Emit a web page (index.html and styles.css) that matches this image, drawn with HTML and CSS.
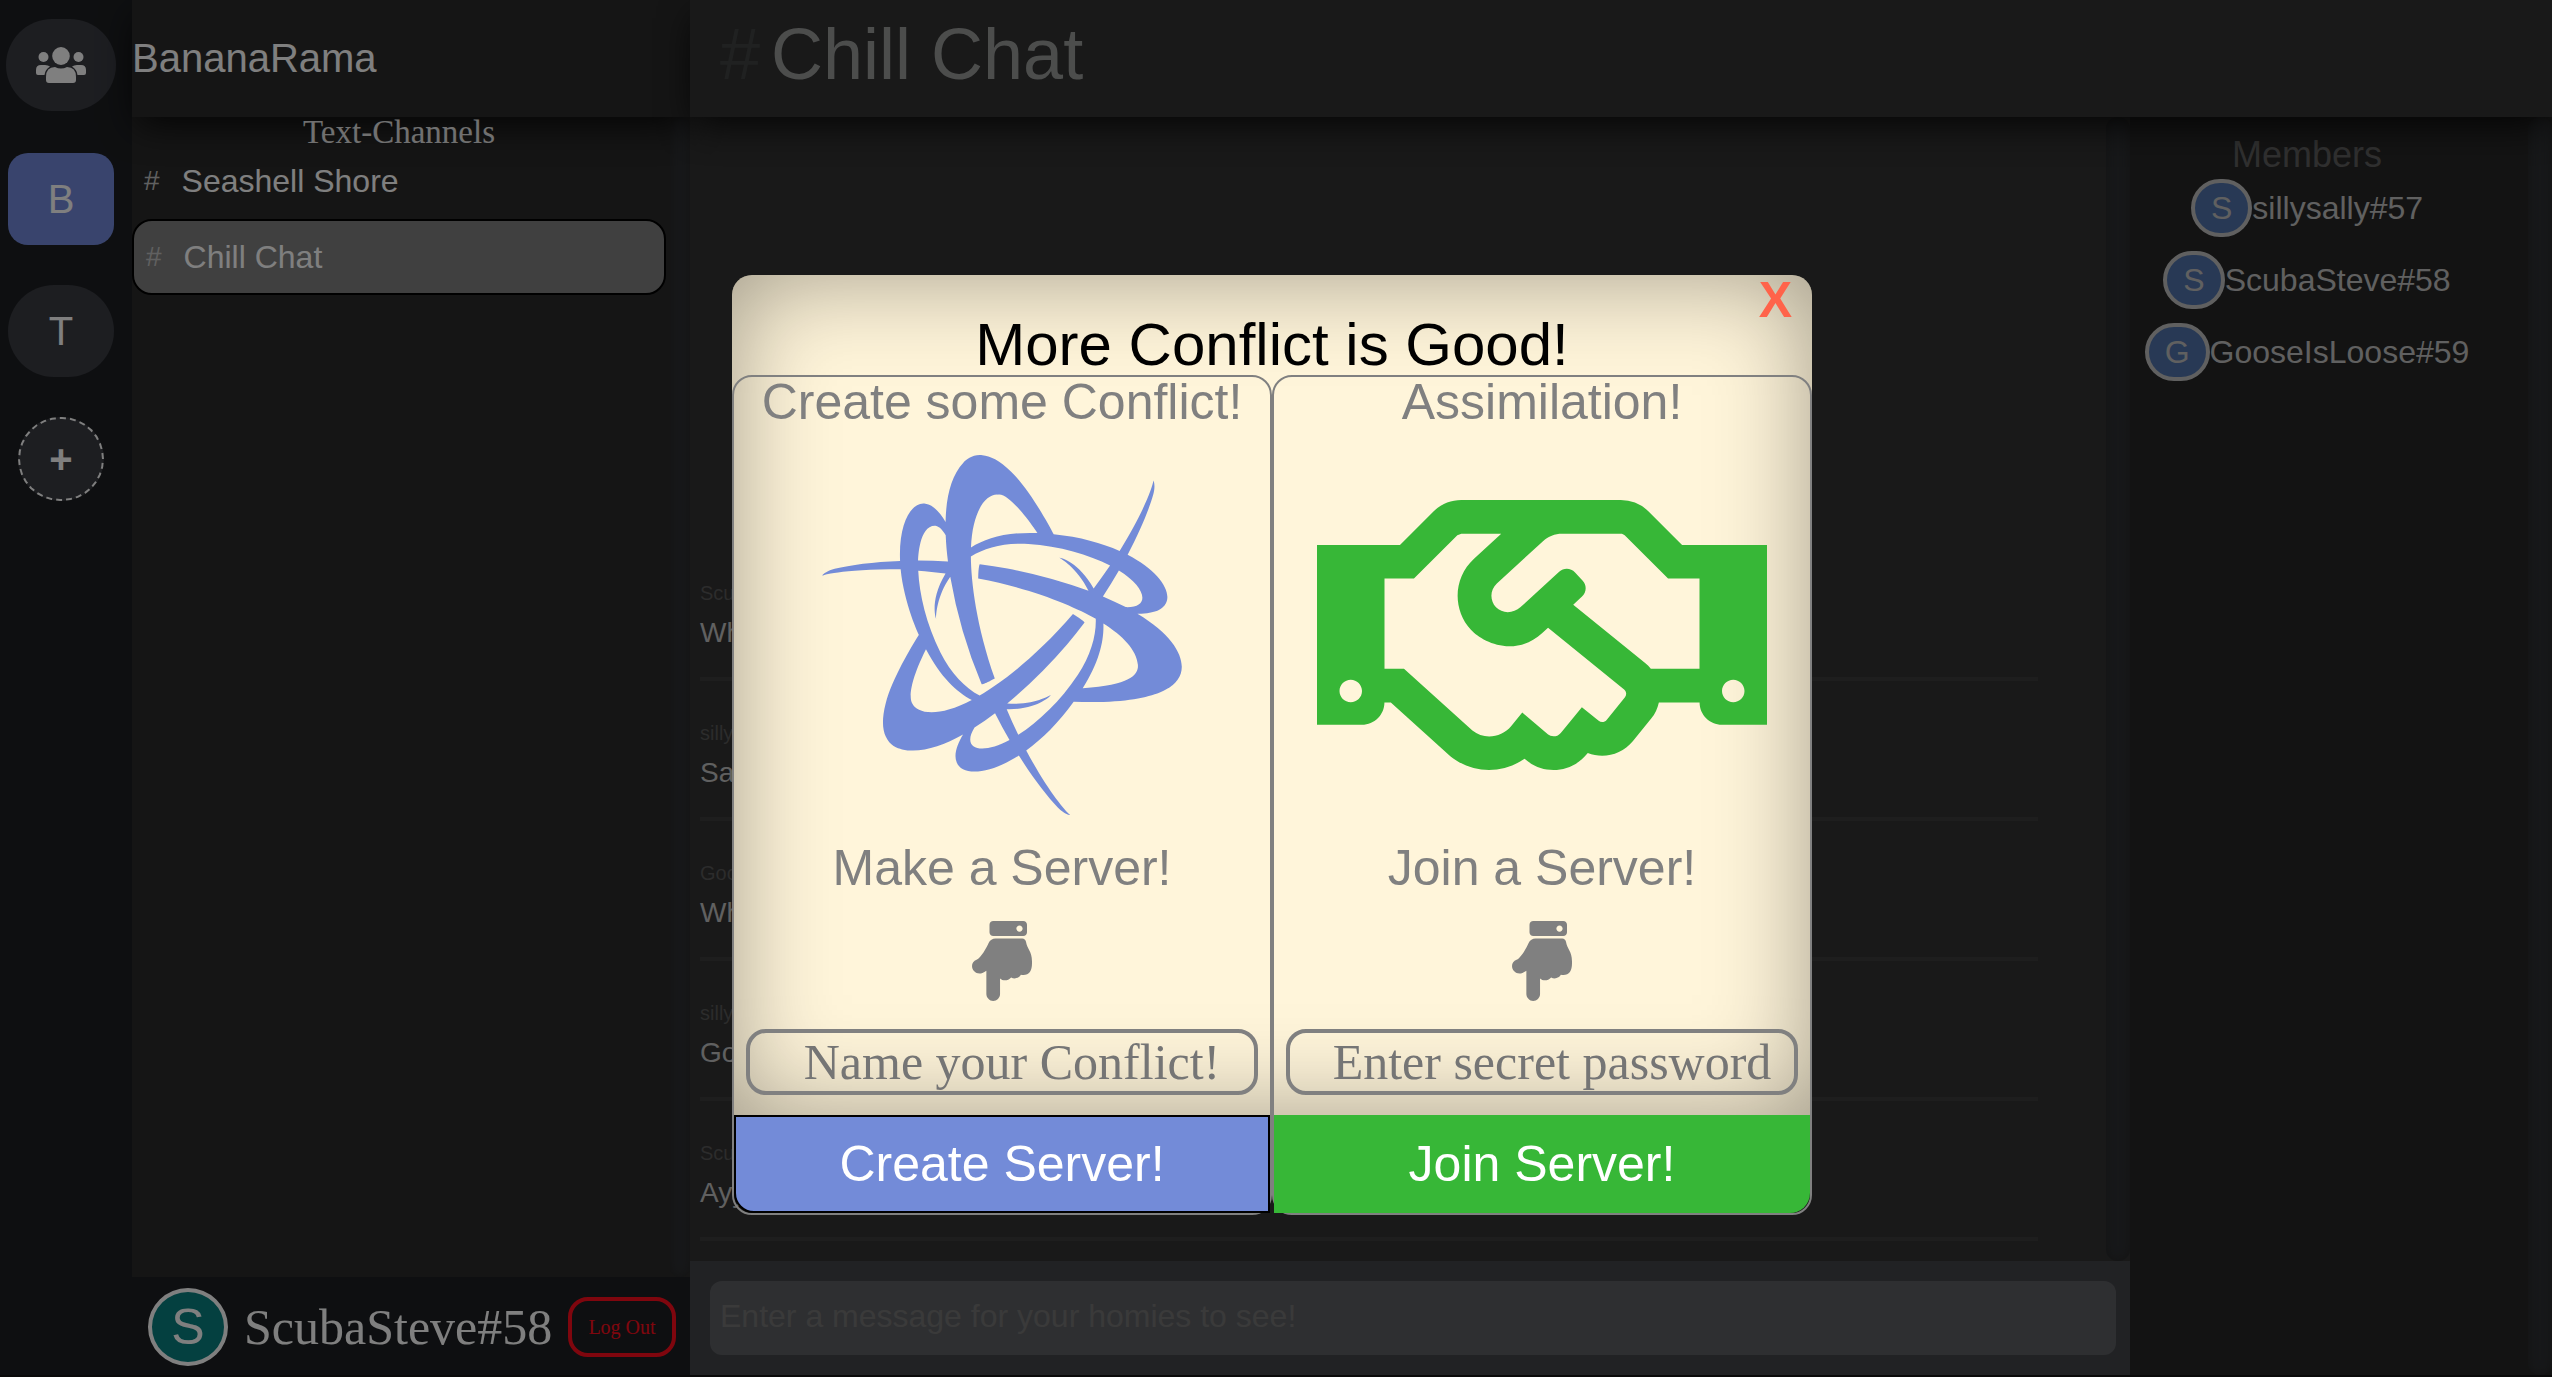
FILE: index.html
```html
<!DOCTYPE html>
<html lang="en">
<head>
<meta charset="utf-8">
<title>Chill Chat</title>
<link rel="stylesheet" href="styles.css">
</head>
<body>
<div class="app">
  <nav class="servers" aria-label="Servers">
    <button class="server server-home" aria-label="Home">
      <svg class="people" viewBox="0 0 50 36" aria-hidden="true">
        <ellipse cx="25" cy="9" rx="8.800" ry="9"/>
        <ellipse cx="7.500" cy="10" rx="5" ry="5"/>
        <ellipse cx="42.500" cy="10" rx="5" ry="5"/>
        <path d="M5 18h4q3 0 5 1.500q-5 3-5.500 8.500H2q-2 0-2-2v-3q0-5 5-5zM45 18h-4q-3 0-5 1.500q5 3 5.500 8.500H48q2 0 2-2v-3q0-5-5-5z"/>
        <path d="M19 20q3 1.500 6 1.500t6-1.500q9 0 9 10v3q0 3-3 3H13q-3 0-3-3v-3q0-10 9-10z"/>
      </svg>
    </button>
    <button class="server server-active">B</button>
    <button class="server">T</button>
    <button class="server server-add" aria-label="Add a server">+</button>
  </nav>

  <aside class="channels">
    <header class="server-name">BananaRama</header>
    <div class="channel-scroll">
      <div class="channel-list">
        <h2 class="channel-title">Text-Channels</h2>
        <a class="channel" href="#seashell-shore"><span class="hash">#</span>Seashell Shore</a>
        <a class="channel channel-active" href="#chill-chat"><span class="hash">#</span>Chill Chat</a>
      </div>
      <div class="track"></div>
    </div>
    <footer class="user-bar">
      <span class="user-avatar">S</span>
      <span class="user-name">ScubaSteve#58</span>
      <button class="logout">Log Out</button>
    </footer>
  </aside>

  <main class="room">
    <header class="room-header"><span class="room-hash">#</span><h1 class="room-title">Chill Chat</h1></header>
    <div class="room-body">
      <section class="chat">
        <div class="chat-scroll">
          <ul class="messages">
            <li class="message"><span class="author">ScubaSteve</span><span class="text">Wh</span></li>
            <li class="message"><span class="author">sillysally</span><span class="text">Sa</span></li>
            <li class="message"><span class="author">GooseIsLoose</span><span class="text">Wh</span></li>
            <li class="message"><span class="author">sillysally</span><span class="text">Go</span></li>
            <li class="message"><span class="author">ScubaSteve</span><span class="text">Ayy</span></li>
          </ul>
          <div class="track"></div>
        </div>
        <form class="composer">
          <input class="composer-input" type="text" aria-label="Message" placeholder="Enter a message for your homies to see!">
        </form>
      </section>
      <aside class="members">
        <div class="member-list">
          <h2 class="members-title">Members</h2>
          <div class="member"><span class="member-avatar">S</span>sillysally#57</div>
          <div class="member"><span class="member-avatar">S</span>ScubaSteve#58</div>
          <div class="member"><span class="member-avatar">G</span>GooseIsLoose#59</div>
        </div>
        <div class="track"></div>
      </aside>
    </div>
  </main>
</div>

<div class="overlay">
  <div class="modal" role="dialog" aria-labelledby="modal-title">
    <button class="close" aria-label="Close">X</button>
    <h2 class="modal-title" id="modal-title">More Conflict is Good!</h2>
    <div class="choices">
      <form class="choice">
        <h3 class="choice-title">Create some Conflict!</h3>
        <svg class="choice-icon create-icon" viewBox="0 0 512 512" aria-hidden="true"><path d="M448.610 225.620c26.870.18 35.570-7.430 38.920-12.370 12.470-16.320-7.060-47.600-52.850-71.330 17.760-33.580 30.110-63.680 36.340-85.300 3.380-11.830 1.090-19 .45-20.250-1.720 10.520-15.850 48.460-48.200 100.050-25-11.220-56.520-20.100-93.770-23.800-8.940-16.940-34.880-63.860-60.480-88.930C252.180 7.140 238.700 1.070 228.180.22h-.05c-13.830-1.550-22.670 5.850-27.400 11-17.200 18.530-24.330 48.870-25 84.070-7.240-12.350-17.170-24.630-28.500-25.930h-.18c-20.660-3.480-38.390 29.220-36 81.290-38.360 1.380-71 5.750-93 11.230-9.900 2.450-16.220 7.270-17.760 9.720 1-.38 22.400-9.220 111.560-9.220 5.220 53 29.750 101.820 26 93.190-9.730 15.400-38.240 62.360-47.310 97.700-5.870 22.880-4.370 37.610.15 47.140 5.570 12.750 16.410 16.720 23.200 18.260 25 5.710 55.380-3.630 86.700-21.140-7.530 12.840-13.900 28.510-9.060 39.340 7.310 19.650 44.490 18.660 88.440-9.450 20.180 32.180 40.070 57.940 55.700 74.120a39.790 39.790 0 0 0 8.750 7.090c5.140 3.210 8.580 3.370 8.580 3.370-8.240-6.750-34-38-62.540-91.780 22.220-16 45.650-38.870 67.470-69.270 122.820 4.600 143.290-24.760 148-31.640 14.670-19.880 3.430-57.440-57.320-93.690zm-77.850 106.220c23.810-37.710 30.340-67.770 29.450-92.330 27.860 17.570 47.180 37.580 49.060 58.830 1.140 12.930-8.100 29.120-78.510 33.500zM216.900 387.690c9.760-6.230 19.530-13.120 29.200-20.490 6.680 13.330 13.600 26.100 20.600 38.190-40.600 21.860-68.840 12.760-49.800-17.700zm215-171.350c-10.290-5.340-21.160-10.340-32.380-15.050a722.459 722.459 0 0 0 22.740-36.900c39.060 24.100 45.900 53.180 9.640 51.950zM279.180 398c-5.510-11.350-11-23.500-16.500-36.440 43.250 1.270 62.420-18.730 63.280-20.410 0 .07-25 15.640-62.530 12.250a718.780 718.780 0 0 0 85.060-84q13.060-15.310 24.930-31.110c-.36-.29-1.540-3-16.510-12-51.700 60.270-102.340 98-132.750 115.920-20.590-11.180-40.840-31.780-55.710-61.490-20-39.920-30-82.390-31.570-116.070 12.300.91 25.270 2.170 38.850 3.880-22.290 36.800-14.390 63-13.470 64.230 0-.07-.95-29.170 20.140-59.570a695.230 695.230 0 0 0 44.670 152.840c.93-.38 1.840.88 18.670-8.250-26.330-74.470-33.760-138.170-34-173.430 20-12.420 48.180-19.800 81.630-17.810 44.570 2.670 86.360 15.250 116.320 30.710q-10.690 15.660-23.330 32.470C365.630 152 339.100 145.840 337.500 146c.11 0 25.900 14.070 41.520 47.220a717.630 717.630 0 0 0-115.340-31.710 646.608 646.608 0 0 0-39.390-6.050c-.07.45-1.810 1.850-2.160 20.330C300 190.280 358.780 215.680 389.360 233c.74 23.550-6.950 51.610-25.410 79.570-24.600 37.310-56.390 67.230-84.770 85.430zm27.400-287c-44.560-1.660-73.580 7.430-94.690 20.670 2-52.300 21.310-76.380 38.210-75.280C267 52.150 305 108.550 306.580 111zm-130.650 3.100c.48 12.110 1.590 24.620 3.210 37.280-14.550-.85-28.740-1.250-42.400-1.260-.08 3.240-.12-51 24.670-49.590h.09c5.760 1.090 10.630 6.880 14.430 13.570zm-28.060 162c20.760 39.700 43.300 60.570 65.250 72.310-46.790 24.760-77.530 20-84.920 4.510-.2-.21-11.130-15.300 19.670-76.810z"/></svg>
        <p class="choice-label">Make a Server!</p>
        <svg class="hand" viewBox="0 0 384 512" aria-hidden="true"><path d="M91.826 467.200V317.966c-8.248 5.841-16.558 10.570-24.918 14.153C35.098 345.752-.014 322.222 0 288c.008-18.616 10.897-32.203 29.092-40 28.286-12.122 64.329-78.648 77.323-107.534 7.956-17.857 25.479-28.453 43.845-28.464l.001-.002h171.526c11.812 0 21.897 8.596 23.703 20.269 7.250 46.837 38.483 61.760 38.315 123.731-.007 2.724.195 13.254.195 16 0 50.654-22.122 81.574-71.263 72.600-9.297 18.597-39.486 30.738-62.315 16.450-21.177 24.645-53.896 22.639-70.944 6.299V467.200c0 24.150-20.201 44.800-43.826 44.800-23.283 0-43.826-21.350-43.826-44.800zM112 72V24c0-13.255 10.745-24 24-24h192c13.255 0 24 10.745 24 24v48c0 13.255-10.745 24-24 24H136c-13.255 0-24-10.745-24-24zm212-24c0-11.046-8.954-20-20-20s-20 8.954-20 20 8.954 20 20 20 20-8.954 20-20z"/></svg>
        <input class="choice-input" type="text" aria-label="Server name" placeholder="Name your Conflict!">
        <button class="submit submit-create" type="button">Create Server!</button>
      </form>
      <form class="choice">
        <h3 class="choice-title">Assimilation!</h3>
        <svg class="choice-icon join-icon" viewBox="0 0 640 512" aria-hidden="true"><path d="M519.200 127.900l-47.600-47.600A56.252 56.252 0 0 0 432 64H205.200c-14.800 0-29.100 5.900-39.600 16.300L118 127.900H0v255.700h64c17.600 0 31.800-14.200 31.900-31.700h9.100l84.600 76.400c30.900 25.100 73.800 25.700 105.600 3.800 12.500 10.800 26 15.900 41.100 15.900 18.200 0 35.300-7.400 48.800-24 22.100 8.700 48.200 2.600 64-16.800l26.200-32.300c5.600-6.900 9.100-14.800 10.900-23h57.900c.1 17.500 14.400 31.700 31.900 31.700h64V127.900H519.200zM48 351.600c-8.800 0-16-7.200-16-16s7.200-16 16-16 16 7.200 16 16c0 8.900-7.200 16-16 16zm390-6.900l-26.100 32.200c-2.800 3.400-7.800 4-11.300 1.200l-23.900-19.400-30 36.500c-6 7.300-15 4.800-18 2.400l-36.800-31.500-15.600 19.200c-13.900 17.100-39.200 19.700-55.300 6.600l-97.300-88H96V175.800h41.900l61.700-61.600c2-.8 3.700-1.500 5.700-2.300H262l-38.700 35.500c-29.400 26.900-31.100 72.300-4.400 101.300 14.800 16.200 61.200 41.200 101.500 4.400l8.200-7.500 108.200 87.800c3.400 2.800 3.900 7.900 1.200 11.300zm106-40.800h-69.200c-2.300-2.800-4.900-5.400-7.700-7.700l-102.700-83.400 12.500-11.400c6.500-6 7-16.100 1-22.600L367 167.100c-6-6.500-16.100-6.900-22.600-1l-55.200 50.600c-9.500 8.700-25.700 9.400-34.600 0-9.300-9.900-8.500-25.100 1.200-33.900l65.600-60.200c7.400-6.800 17-10.500 27-10.500l83.700-.2c2.100 0 4.100.8 5.500 2.300l61.700 61.600H544v128.100zm48 47.700c-8.800 0-16-7.200-16-16s7.200-16 16-16 16 7.200 16 16c0 8.900-7.200 16-16 16z"/></svg>
        <p class="choice-label">Join a Server!</p>
        <svg class="hand" viewBox="0 0 384 512" aria-hidden="true"><path d="M91.826 467.200V317.966c-8.248 5.841-16.558 10.570-24.918 14.153C35.098 345.752-.014 322.222 0 288c.008-18.616 10.897-32.203 29.092-40 28.286-12.122 64.329-78.648 77.323-107.534 7.956-17.857 25.479-28.453 43.845-28.464l.001-.002h171.526c11.812 0 21.897 8.596 23.703 20.269 7.250 46.837 38.483 61.760 38.315 123.731-.007 2.724.195 13.254.195 16 0 50.654-22.122 81.574-71.263 72.600-9.297 18.597-39.486 30.738-62.315 16.450-21.177 24.645-53.896 22.639-70.944 6.299V467.200c0 24.150-20.201 44.800-43.826 44.800-23.283 0-43.826-21.350-43.826-44.800zM112 72V24c0-13.255 10.745-24 24-24h192c13.255 0 24 10.745 24 24v48c0 13.255-10.745 24-24 24H136c-13.255 0-24-10.745-24-24zm212-24c0-11.046-8.954-20-20-20s-20 8.954-20 20 8.954 20 20 20 20-8.954 20-20z"/></svg>
        <input class="choice-input" type="text" aria-label="Server password" placeholder="Enter secret password">
        <button class="submit submit-join" type="button">Join Server!</button>
      </form>
    </div>
  </div>
</div>
</body>
</html>
```
FILE: styles.css
```css
* {
  box-sizing: border-box;
}

body {
  margin: 0;
  background: #151515;
  color: #fff;
  font-family: "Liberation Sans", Arial, sans-serif;
  font-size: 32px;
}

h1, h2, h3, p, ul {
  margin: 0;
  padding: 0;
  font-weight: 400;
}

ul {
  list-style: none;
}

button, input {
  border: 0;
  background: none;
  color: inherit;
  font: inherit;
}

.app {
  display: flex;
  height: 100vh;
  padding-bottom: 2px;
}

/* server rail */

.servers {
  flex: 0 0 132px;
  display: flex;
  flex-direction: column;
  align-items: center;
  gap: 40px;
  padding: 19px 10px 0 0;
  background: #1d1f22;
}

.server {
  flex: none;
  width: 106px;
  height: 92px;
  padding: 0;
  border-radius: 46px;
  background: #3a3c43;
  font-size: 40px;
}

.server-home {
  width: 110px;
  margin-bottom: 2px;
}

.server-active {
  border-radius: 20px;
  background: #7289da;
}

.server-add {
  width: 86px;
  height: 84px;
  border: 2px dashed #fff;
  border-radius: 43px;
  font-weight: 700;
}

.people {
  display: block;
  width: 50px;
  height: 36px;
  margin: 0 auto;
  fill: #fff;
}

/* channel column */

.channels {
  flex: 0 0 558px;
  display: flex;
  flex-direction: column;
  background: #2a2a2a;
}

.server-name,
.room-header {
  position: relative;
  flex: none;
  display: flex;
  height: 117px;
  box-shadow: 0 12px 36px -6px rgba(0, 0, 0, 0.85);
}

.server-name {
  align-items: center;
  background: #2a2a2a;
  font-size: 40px;
}

.channel-scroll,
.chat-scroll,
.room-body {
  flex: 1;
  display: flex;
  min-height: 0;
}

.channel-list {
  flex: 1;
  padding-right: 4px;
}

.track {
  flex: 0 0 20px;
  border-radius: 12px;
  background: #2e3033;
  box-shadow: inset 0 0 10px #262626;
}

.channel-title {
  position: relative;
  padding-bottom: 4px;
  font-family: "Liberation Serif", "Times New Roman", serif;
  font-size: 33px;
  line-height: 30px;
  color: #e0e0e0;
  text-align: center;
}

.channel {
  display: flex;
  align-items: center;
  gap: 22px;
  height: 60px;
  margin-bottom: 8px;
  padding-left: 12px;
  color: inherit;
  text-decoration: none;
}

.channel-active {
  height: 76px;
  border: 2px solid #000;
  border-radius: 20px;
  background: #808080;
}

.hash {
  font-size: 28px;
  color: #c0c0c0;
}

.user-bar {
  flex: none;
  display: flex;
  align-items: center;
  height: 98px;
  padding: 2px 14px 0 16px;
  background: #1d1f22;
  font-family: "Liberation Serif", "Times New Roman", serif;
}

.user-avatar {
  width: 80px;
  height: 78px;
  border: 4px solid #fff;
  border-radius: 50%;
  background: #088080;
  font: 50px/70px "Liberation Sans", Arial, sans-serif;
  text-align: center;
}

.user-name {
  flex: 1;
  padding-left: 16px;
  font-size: 50px;
}

.logout {
  width: 108px;
  height: 60px;
  padding: 0;
  border: 4px solid #ff0c1c;
  border-radius: 20px;
  color: #ff0c1c;
  font-size: 20px;
}

/* chat room */

.room {
  flex: 1;
  display: flex;
  flex-direction: column;
  min-width: 0;
  background: #323232;
}

.room-header {
  align-items: flex-start;
  gap: 11px;
  padding: 13px 30px 0;
  background: #323232;
  font-size: 72px;
}

.room-hash {
  color: #404343;
}

.room-title {
  font-size: 72px;
  color: #989a99;
}

.chat {
  flex: 1;
  display: flex;
  flex-direction: column;
  min-width: 0;
}

.messages {
  flex: 1;
  display: flex;
  flex-direction: column;
  justify-content: flex-end;
  padding: 0 68px 20px 10px;
}

.message {
  display: flex;
  flex-direction: column;
  justify-content: flex-end;
  gap: 12px;
  height: 140px;
  padding-bottom: 28px;
  border-bottom: 4px solid #3c3c3c;
}

.author {
  font-size: 20px;
  color: #585858;
}

.text {
  font-size: 28px;
  line-height: 32px;
  color: #c0c0c0;
}

.chat .track,
.members .track {
  flex-basis: 24px;
}

.composer {
  flex: none;
  padding: 20px 14px 20px 20px;
  background: #434549;
}

.composer-input {
  display: block;
  width: 100%;
  height: 74px;
  padding: 0 10px 4px;
  border-radius: 12px;
  background: #5d5f63;
}

.composer-input::placeholder {
  color: #757575;
}

.members {
  flex: 0 0 422px;
  display: flex;
  background: #272727;
}

.member-list {
  flex: 1;
  display: flex;
  flex-direction: column;
  align-items: center;
  gap: 14px;
  padding: 18px 44px 0 0;
  color: #c0c0c0;
}

.members-title {
  margin-bottom: -10px;
  font-size: 36px;
  line-height: 40px;
  color: #606060;
}

.member {
  display: flex;
  align-items: center;
}

.member-avatar {
  height: 58px;
  padding: 0 16px;
  border: 4px solid #c0c0c0;
  border-radius: 29px;
  background: #5073aa;
  line-height: 50px;
}

/* server dialog */

.overlay {
  position: fixed;
  inset: 0;
  display: flex;
  align-items: flex-start;
  justify-content: center;
  padding: 275px 8px 0 0;
  background: rgba(0, 0, 0, 0.5);
}

.modal {
  position: relative;
  width: 1080px;
}

.modal::before {
  content: "";
  position: absolute;
  inset: 0 0 100px;
  border-radius: 20px 20px 0 0;
  background: #fff5da;
  box-shadow: inset 0 0 100px rgba(0, 0, 0, 0.38);
}

.close {
  position: absolute;
  top: 0;
  right: 20px;
  padding: 0;
  color: #ff634a;
  font-size: 50px;
  font-weight: 700;
  line-height: 50px;
}

.modal-title {
  position: relative;
  padding-top: 40px;
  font-size: 60px;
  line-height: 60px;
  color: #000;
  text-align: center;
}

.choices {
  position: relative;
  display: grid;
  grid-template-columns: 1fr 1fr;
}

.choice {
  display: flex;
  flex-direction: column;
  align-items: center;
  gap: 28px;
  border: 2px solid #808080;
  border-radius: 20px;
  color: #808080;
  font-size: 50px;
  line-height: 50px;
}

.choice-title {
  font-size: 50px;
}

.choice-icon {
  width: 450px;
  height: 360px;
}

.create-icon {
  fill: #738bd8;
}

.join-icon {
  fill: #37b737;
}

.hand {
  width: 60px;
  height: 80px;
  fill: #808080;
}

.choice-input {
  width: 512px;
  height: 66px;
  padding: 0 0 0 20px;
  border: 4px solid #808080;
  border-radius: 20px;
  font-family: "Liberation Serif", "Times New Roman", serif;
  text-align: center;
}

.choice-input::placeholder {
  color: #757575;
}

.submit {
  align-self: stretch;
  height: 98px;
  margin-top: -8px;
  color: #fff;
}

.submit-create {
  border: 2px solid #000;
  border-radius: 0 0 0 20px;
  background: #738bd8;
}

.submit-join {
  border-radius: 0 0 20px 0;
  background: #37b737;
}

.close,
.modal-title {
  z-index: 1;
}
```
